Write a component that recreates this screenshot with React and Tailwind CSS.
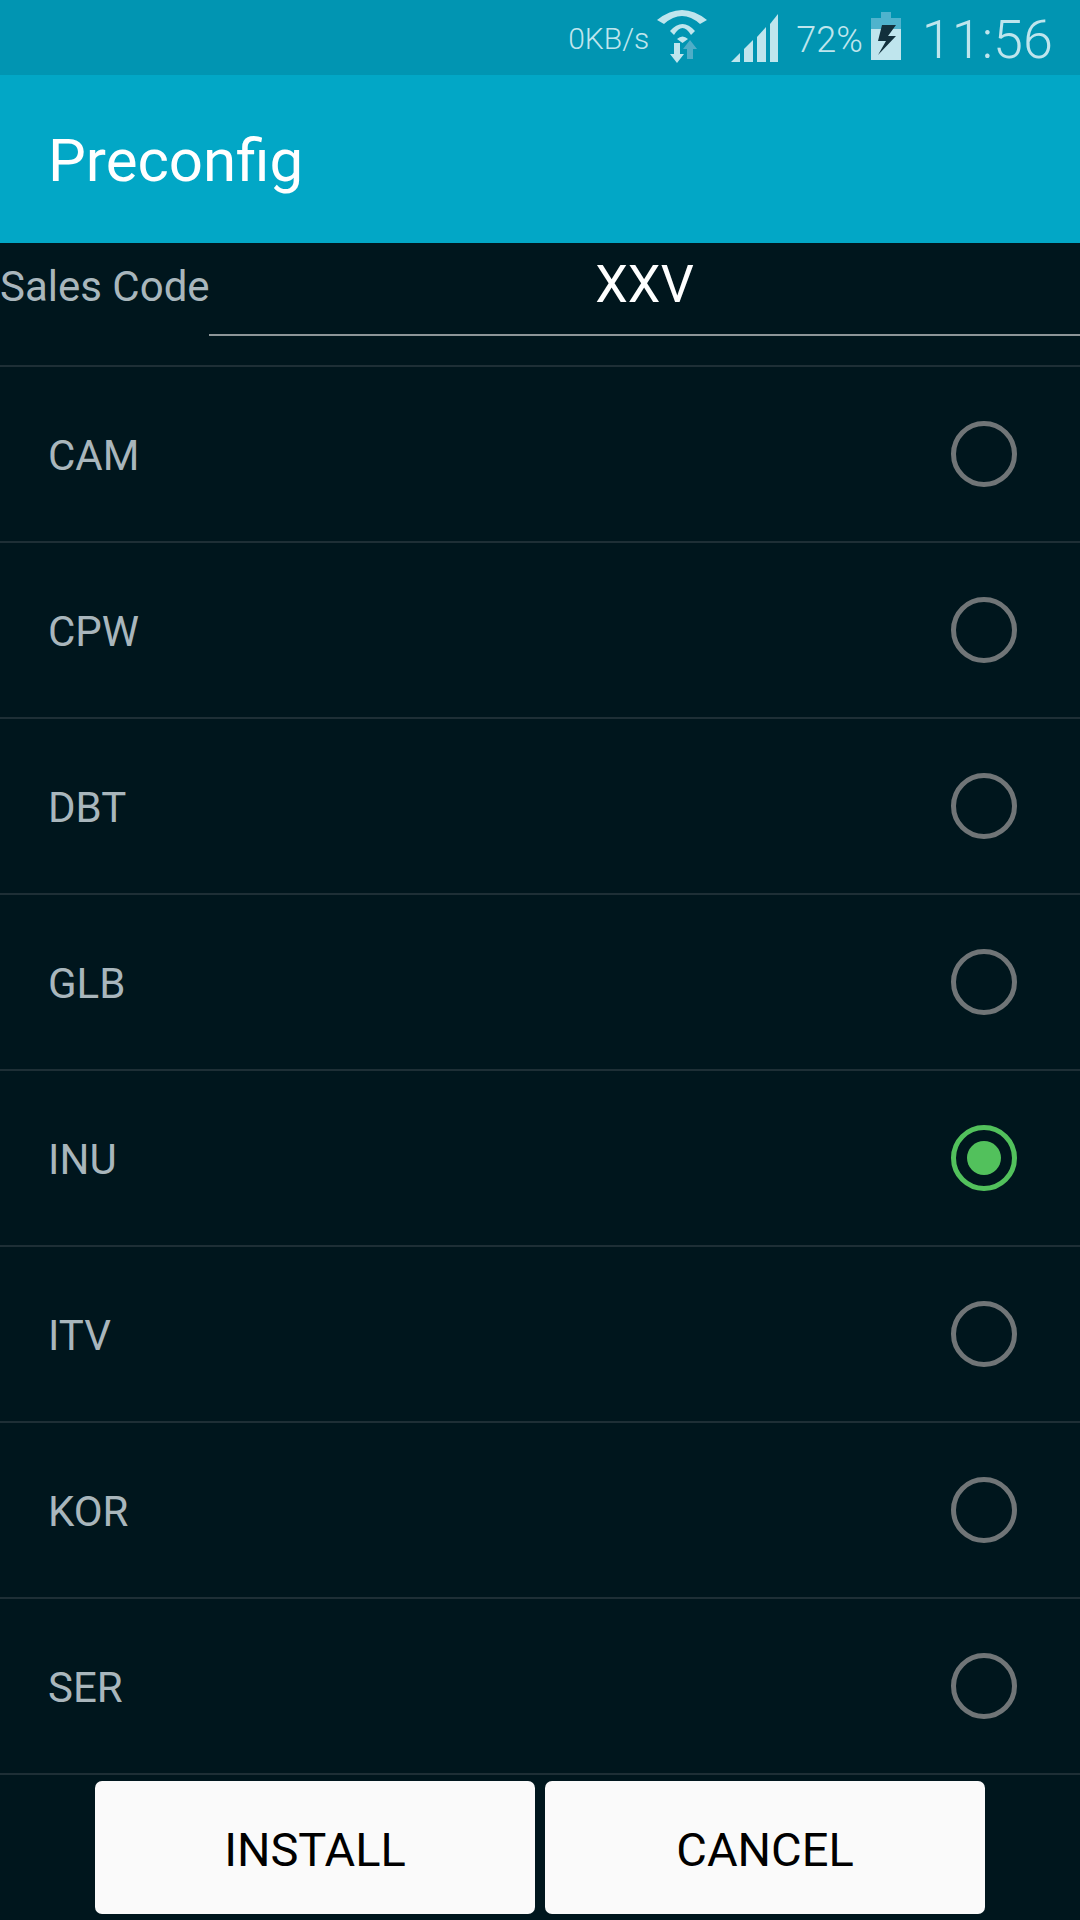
const rows = ["CAM", "CPW", "DBT", "GLB", "INU", "ITV", "KOR", "SER"];

function Wifi() {
  return (
    <svg width="50" height="53" viewBox="0 0 50 53" className="shrink-0">
      <path d="M0 10 Q25 -10 50 10 L43 14 Q25 -2 7 14Z" fill="#bfe5ed" />
      <path d="M13 21 Q25.5 7 38 21 L34 25 Q25.5 11 17 25Z" fill="#bfe5ed" />
      <path d="M20 29 Q25.5 24 31 29 L25.5 33Z" fill="#bfe5ed" />
      <path d="M17 33 H23 V44 H27 L20 53 L13 44 H17Z" fill="#bfe5ed" />
      <path d="M33 30 L40 39 H36 V49 H30 V39 H26Z" fill="#4fadc7" />
    </svg>
  );
}

function Signal() {
  return (
    <svg width="48" height="48" viewBox="0 0 48 48" className="shrink-0">
      <path d="M1 48 L10 39 V48Z" fill="#bfe5ed" />
      <path d="M14 35 L23 26 V48 H14Z" fill="#bfe5ed" />
      <path d="M27 23 L36 13 V48 H27Z" fill="#bfe5ed" />
      <path d="M40 10 L48 0 V48 H40Z" fill="#bfe5ed" />
    </svg>
  );
}

function Battery() {
  return (
    <svg width="30" height="48" viewBox="0 0 30 48" className="shrink-0">
      <path d="M10 0 H20 V6 H30 V48 H0 V6 H10Z" fill="#4fb3cd" />
      <path d="M0 17 H30 V48 H0Z" fill="#bfe5ed" />
      <path d="M11 13 H25 L17 24 H25 L7 43 L15 29 H7Z" fill="#12303c" />
    </svg>
  );
}

function Radio({ on }) {
  return (
    <div
      className={
        on
          ? "w-[66px] h-[66px] rounded-full border-[5px] border-[#52c15c] flex items-center justify-center"
          : "w-[66px] h-[66px] rounded-full border-[5px] border-[#707577]"
      }
    >
      {on && <div className="w-[34px] h-[34px] rounded-full bg-[#52c15c]" />}
    </div>
  );
}

export default function App() {
  return (
    <div className="w-[1080px] h-[1920px] bg-[#00161d] flex flex-col overflow-hidden font-['Roboto',sans-serif]">
      <div className="h-[75px] bg-[#0195b2] flex items-center justify-end pr-[27px] text-[#bfe5ed]">
        <span className="text-[30px] font-light mr-[8px] mt-[2px]">0KB/s</span>
        <div className="mb-[2px] mr-[23px]"><Wifi /></div>
        <Signal />
        <span className="text-[36px] font-light ml-[18px] mr-[8px] mt-[4px]">72%</span>
        <div className="mb-[4px]"><Battery /></div>
        <span className="text-[54px] font-light ml-[21px] mt-[4px]">11:56</span>
      </div>
      <div className="h-[168px] bg-[#02a7c6] flex items-center pl-[48px]">
        <span className="text-[60px] text-white mt-[4px]">Preconfig</span>
      </div>
      <div className="h-[124px] border-b-2 border-[#1e2f36] flex items-start">
        <span className="text-[42px] text-[#a9b6bc] w-[209px] shrink-0 whitespace-nowrap mt-[12px]">Sales Code</span>
        <div className="flex-1 h-[93px] border-b-2 border-[#8d9598] flex items-start justify-center">
          <span className="text-[52px] text-white mt-[3px]">XXV</span>
        </div>
      </div>
      {rows.map((r) => (
        <div key={r} className="h-[176px] shrink-0 border-b-2 border-[#1e2f36] flex items-center justify-between pl-[48px] pr-[63px]">
          <span className="text-[42px] text-[#a9b6bc] mt-[2px]">{r}</span>
          <Radio on={r === "INU"} />
        </div>
      ))}
      <div className="flex justify-center gap-[10px] pt-[6px]">
        <button className="w-[440px] h-[133px] bg-[#fafafa] rounded-[7px] text-[47px] text-black pt-[6px]">INSTALL</button>
        <button className="w-[440px] h-[133px] bg-[#fafafa] rounded-[7px] text-[47px] text-black pt-[6px]">CANCEL</button>
      </div>
    </div>
  );
}
